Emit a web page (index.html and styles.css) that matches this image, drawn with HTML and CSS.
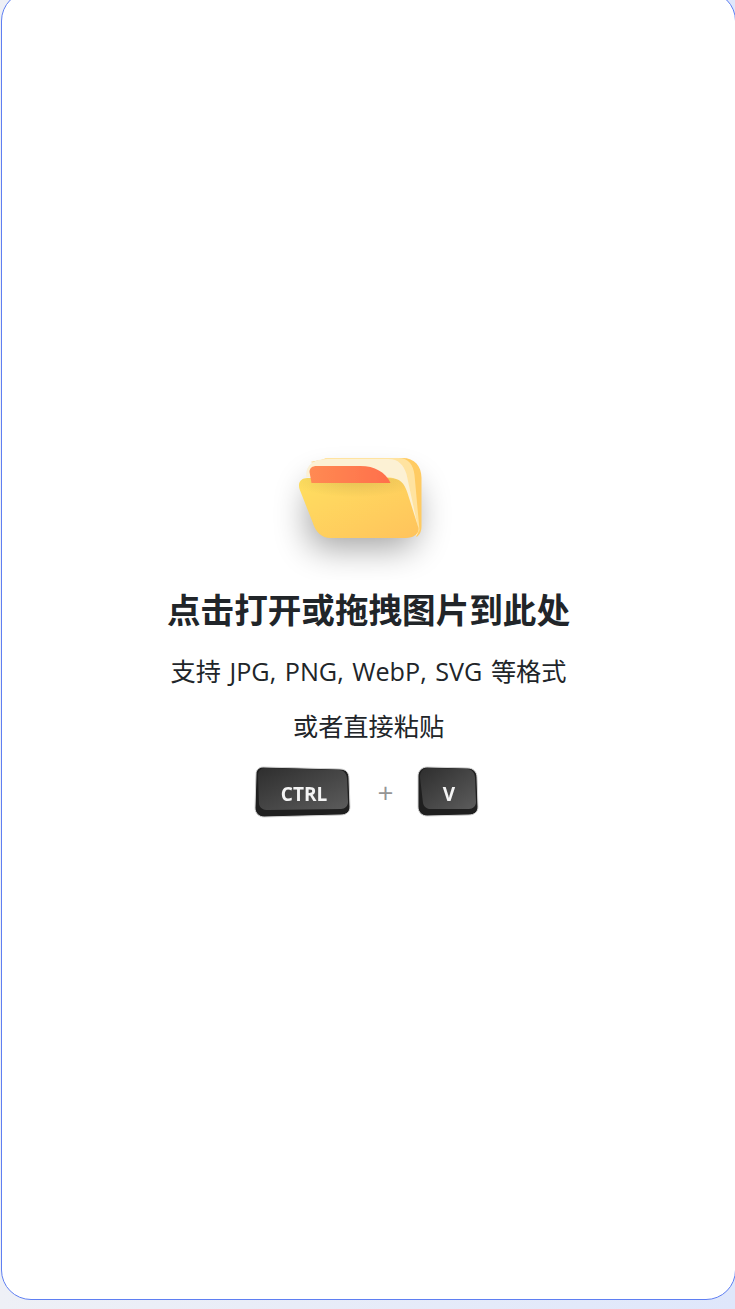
FILE: index.html
```html
<!DOCTYPE html>
<html lang="zh-CN">
  <head>
    <meta charset="UTF-8" />
    <meta name="viewport" content="width=device-width, initial-scale=1.0" />
    <title>图片上传</title>
    <link rel="stylesheet" href="styles.css">
  </head>
  <body>
    <div class="dropzone">
      <!-- 文件夹图标 -->
      <svg class="folder" width="230" height="140" viewBox="253.5 440 230 140">
        <defs>
          <filter id="blur" x="-60%" y="-60%" width="220%" height="220%">
            <feGaussianBlur stdDeviation="17" />
          </filter>
          <filter id="soft" x="-5%" y="-5%" width="110%" height="110%">
            <feGaussianBlur stdDeviation="0.5" />
          </filter>
          <linearGradient id="folderFront" x1="0" y1="0" x2="1" y2="1">
            <stop offset="0" stop-color="#ffdf5f" />
            <stop offset="1" stop-color="#ffc35c" />
          </linearGradient>
          <linearGradient id="folderTab" x1="0" y1="0" x2="1" y2="0">
            <stop offset="0" stop-color="#ff8a52" />
            <stop offset="1" stop-color="#ff6f4c" />
          </linearGradient>
          <radialGradient id="tabShade" cx="0.5" cy="0" r="0.6">
            <stop offset="0" stop-color="#a08840" stop-opacity="0.3" />
            <stop offset="1" stop-color="#a08840" stop-opacity="0" />
          </radialGradient>
        </defs>
        <rect class="folder-shadow" x="308" y="482" width="108" height="66" rx="16" filter="url(#blur)" />
        <g filter="url(#soft)">
          <path class="folder-halo" d="M306 478C304 468 310 461 320 460L340 458V480H306Z" />
          <path class="folder-back" d="M330 458H402C414 458 421 466 421 478V526C421 532 419 535 416 537L400 480L310 462Z" />
          <path class="folder-paper2" d="M325 458H398C408 458 413 465 414 475L419 530L416 536L400 480L312 466Z" />
          <path class="folder-paper1" d="M318 460C322 459 326 459 330 459H388C398 459 403 465 406 474L418 530L416 536L402 490C399 482 394 477 388 477H306C305 468 310 462 318 460Z" />
          <path fill="url(#folderFront)" d="M307 478H389C399 478 404 483 407 493L418 528C419 533 414 538 405 538H330C321 538 315 532 312 522L299 489C297 482 301 478 307 478Z" />
          <path fill="url(#tabShade)" d="M307 478H389C399 478 404 483 407 493L412 510H306L299 489C297 482 301 478 307 478Z" />
          <path fill="url(#folderTab)" d="M309 472C309 468 312 466 316 466H360C374 466 385 472 390 483H311Z" />
        </g>
      </svg>

      <h1 class="title">点击打开或拖拽图片到此处</h1>
      <p class="hint">支持 JPG, PNG, WebP, SVG 等格式</p>
      <p class="hint">或者直接粘贴</p>

      <div class="keys">
        <svg class="key" width="98" height="54" viewBox="253 766 98 54">
          <defs>
            <linearGradient id="keyFace" x1="0" y1="0" x2="1" y2="1">
              <stop offset="0" stop-color="#2e2e2e" />
              <stop offset="1" stop-color="#5c5c5c" />
            </linearGradient>
          </defs>
          <path class="key-edge" d="M263 768L340 770C346 770 349 774 349 779L350 808C350 813 346 816 341 816L264 818C259 818 255 814 255 809L256 775C256 771 259 768 263 768Z" />
          <path fill="url(#keyFace)" d="M265 769L339 771C344 771 347 775 347 780L348 803C348 807 345 810 341 810L268 811C263 811 260 809 259 805L258 776C258 772 261 769 265 769Z" />
          <text class="key-label" x="304" y="802">CTRL</text>
        </svg>
        <span class="plus">+</span>
        <svg class="key" width="64" height="54" viewBox="416 766 64 54">
          <path class="key-edge" d="M427 768L468 769C473 769 477 773 477 778L478 808C478 813 474 816 469 816L427 817C422 817 418 813 418 808L418 777C418 772 422 768 427 768Z" />
          <path fill="url(#keyFace)" d="M428 769L467 770C472 770 475 774 475 779L476 803C476 807 473 810 469 810L431 810C427 810 424 808 423 804L420 778C420 773 423 769 428 769Z" />
          <text class="key-label" x="449" y="802">V</text>
        </svg>
      </div>
    </div>
  </body>
</html>
```

FILE: styles.css
```css
html,
body {
  height: 100%;
}
body {
  margin: 0;
  overflow: hidden;
  background: linear-gradient(90deg, #eef0f6, #dfe7fb);
  font-family: "Open Sans", "Noto Sans CJK SC", sans-serif;
  color: #212529;
}
.dropzone {
  box-sizing: border-box;
  width: 735px;
  height: 1309px;
  margin: -9px 0 0 1px;
  padding-top: 448px;
  display: flex;
  flex-direction: column;
  align-items: center;
  background: #fff;
  border: 1px solid #5f7ff2;
  border-radius: 30px;
}
.folder {
  display: block;
}
.title {
  margin: 5px 0 0;
  font-size: 33.6px;
  line-height: 50px;
  font-weight: 700;
}
.hint {
  margin: 17px 0 0;
  font-size: 25.2px;
  line-height: 38px;
  word-spacing: 2px;
}
.keys {
  margin: 20px 4px 0 0;
  display: flex;
  align-items: center;
}
.key {
  display: block;
  filter: blur(0.6px);
}
.plus {
  width: 65px;
  padding-left: 2px;
  margin-right: -2px;
  text-align: center;
  font-size: 28px;
  color: #959595;
}
.key-edge {
  fill: #1f1f1f;
  stroke: #d4d4d4;
  stroke-width: 1;
}
.key-label {
  fill: #f4f4f4;
  font-size: 19px;
  font-weight: 700;
  text-anchor: middle;
}
.folder-shadow {
  fill: #000;
  opacity: 0.36;
}
.folder-halo {
  fill: #f2f2f2;
}
.folder-back {
  fill: #ffcb62;
}
.folder-paper2 {
  fill: #ffe3a0;
}
.folder-paper1 {
  fill: #fcf1d4;
}
```
